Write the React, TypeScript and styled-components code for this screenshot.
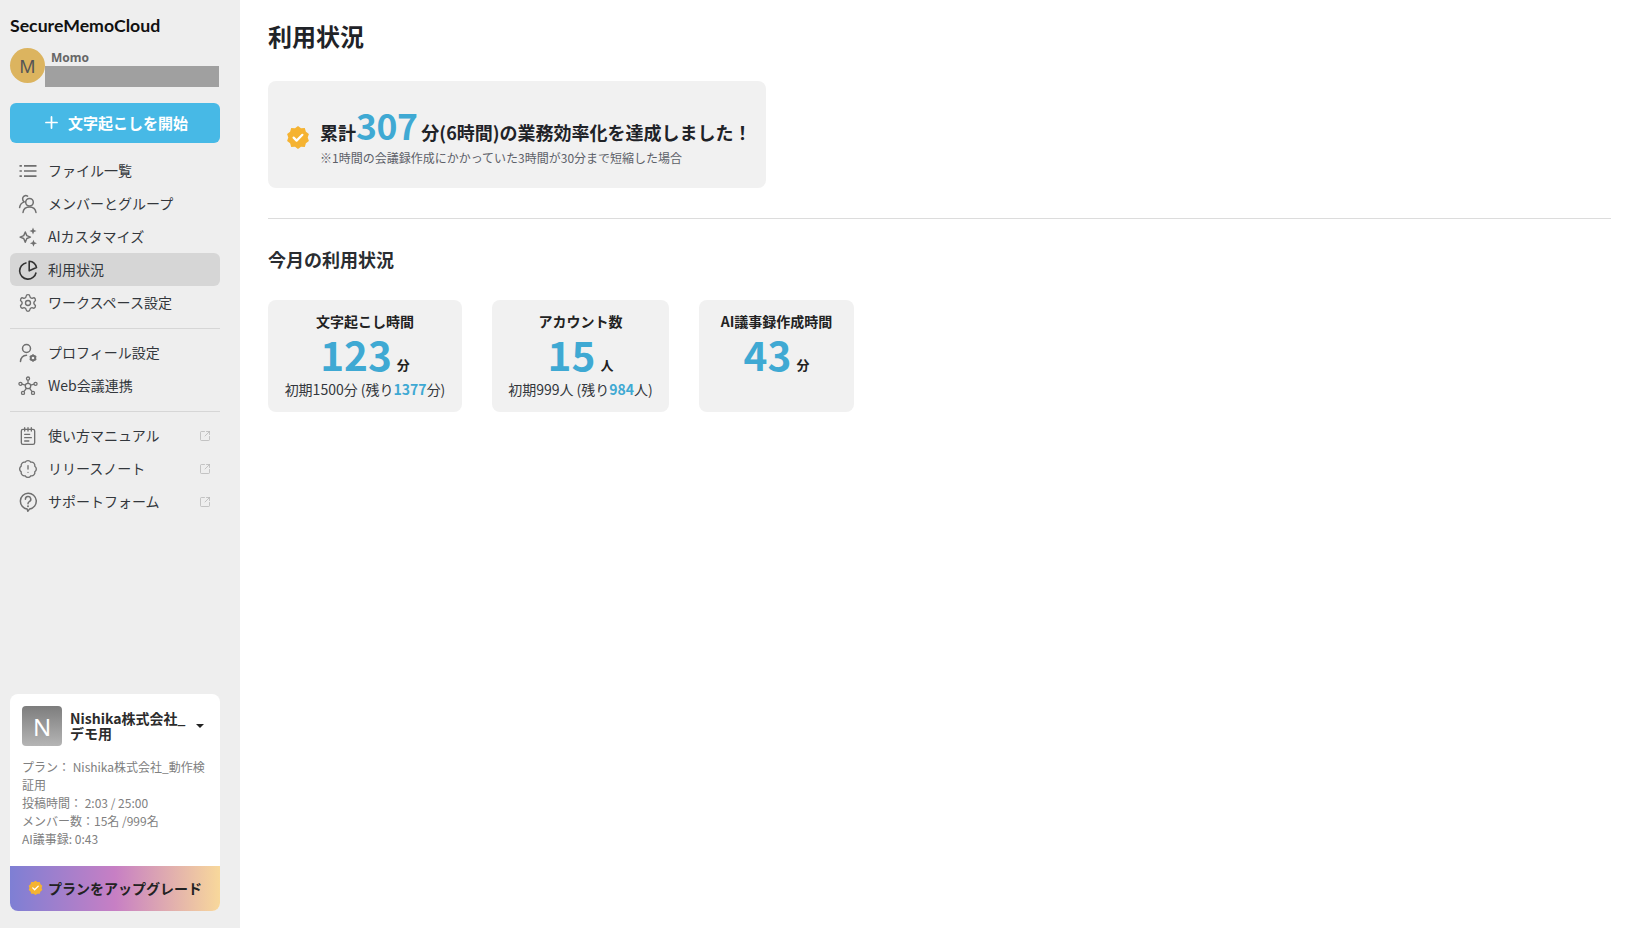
import React from "react";
import styled, { createGlobalStyle } from "styled-components";
import { Settings, NotepadText, BadgeAlert, Plus, SquareArrowOutUpRight } from "lucide-react";

const GlobalStyle = createGlobalStyle`
  html, body { margin: 0; padding: 0; height: 100%; background: #fff; }
  body {
    font-family: "Noto Sans CJK JP", "Noto Sans", sans-serif;
    color: #1f2328;
    overflow: hidden;
  }
  * { box-sizing: border-box; }
`;

const Page = styled.div`
  display: flex;
  width: 1636px;
  height: 928px;
`;

const Sidebar = styled.aside`
  width: 240px;
  height: 100%;
  flex-shrink: 0;
  background: #eeeeee;
  padding: 14px 20px 17px 10px;
  display: flex;
  flex-direction: column;
`;

const Logo = styled.div`
  font-family: "Lato", sans-serif;
  font-weight: 700;
  font-size: 17.7px;
  line-height: 24px;
  color: #111;
`;

const UserRow = styled.div`
  display: flex;
  margin-top: 10px;
  height: 39px;
`;

const Avatar = styled.div`
  width: 35px;
  height: 35px;
  border-radius: 50%;
  background: #dcb45f;
  color: #555;
  font-size: 18px;
  display: flex;
  align-items: center;
  justify-content: center;
  font-family: "Noto Sans", sans-serif;
`;

const UserInfo = styled.div`
  flex: 1;
  display: flex;
  flex-direction: column;
  padding-top: 2px;
`;

const UserName = styled.div`
  font-family: "Noto Sans", sans-serif;
  font-size: 12px;
  font-weight: 700;
  line-height: 16px;
  color: #666;
  padding-left: 6px;
`;

const RedactedBar = styled.div`
  width: 174px;
  height: 21px;
  background: #a0a0a0;
`;

const StartButton = styled.button`
  margin-top: 16px;
  height: 40px;
  width: 210px;
  border: none;
  border-radius: 6px;
  background: #47b9e6;
  color: #fff;
  font-family: inherit;
  font-size: 15px;
  font-weight: 700;
  display: flex;
  align-items: center;
  justify-content: center;
  gap: 7px;
  padding: 0 0 2px;
`;

const Nav = styled.nav`
  margin-top: 11px;
  display: flex;
  flex-direction: column;
`;

const NavRow = styled.div<{ $active?: boolean }>`
  height: 33px;
  width: 210px;
  display: flex;
  align-items: center;
  padding: 0 8px;
  border-radius: 6px;
  font-size: 14px;
  color: #33373c;
  background: ${(p) => (p.$active ? "#d6d6d6" : "transparent")};
`;

const NavIcon = styled.span<{ $active?: boolean }>`
  width: 20px;
  height: 20px;
  display: flex;
  align-items: center;
  justify-content: center;
  margin-right: 10px;
  color: ${(p) => (p.$active ? "#333" : "#6f6f6f")};
`;

const NavLabel = styled.span`
  flex: 1;
  white-space: nowrap;
  padding-bottom: 1px;
`;

const External = styled.span`
  display: flex;
  color: #b0b0b0;
  margin-right: 1px;
`;

const NavDivider = styled.div`
  width: 210px;
  height: 1px;
  background: #d6d6d6;
  margin: 9px 0 7px;
`;

const WorkspaceCard = styled.div`
  margin-top: auto;
  width: 210px;
  background: #fff;
  border-radius: 8px;
  overflow: hidden;
`;

const WorkspaceHead = styled.div`
  display: flex;
  align-items: center;
  padding: 12px 12px 0 12px;
`;

const WorkspaceLogo = styled.div`
  width: 40px;
  height: 40px;
  border-radius: 4px;
  background: linear-gradient(#7d7d7d, #b5b5b5);
  color: #fff;
  font-family: "Noto Sans", sans-serif;
  font-size: 24px;
  display: flex;
  align-items: center;
  justify-content: center;
  flex-shrink: 0;
`;

const WorkspaceName = styled.div`
  flex: 1;
  margin-left: 8px;
  font-size: 14px;
  font-weight: 700;
  line-height: 15px;
  color: #2c2c2c;
`;

const Caret = styled.span`
  width: 0;
  height: 0;
  border-left: 4px solid transparent;
  border-right: 4px solid transparent;
  border-top: 4px solid #222;
  margin-right: 4px;
`;

const WorkspaceInfo = styled.div`
  padding: 12px 12px 0 12px;
  font-size: 12px;
  line-height: 18px;
  height: 120px;
  color: #808080;
`;

const UpgradeButton = styled.div`
  height: 45px;
  background: linear-gradient(90deg, #7e7fd4 0%, #c77fc4 50%, #f8d89b 100%);
  display: flex;
  align-items: center;
  justify-content: center;
  gap: 5px;
  padding-bottom: 2px;
  font-size: 14px;
  font-weight: 700;
  color: #222;
`;

const Main = styled.main`
  flex: 1;
  padding: 18px 25px 0 28px;
`;

const Title = styled.h1`
  margin: 0;
  font-size: 24px;
  font-weight: 700;
  line-height: 36px;
  color: #1f2328;
`;

const Banner = styled.div`
  margin-top: 27px;
  width: 498px;
  height: 107px;
  background: #f1f1f1;
  border-radius: 8px;
  display: flex;
  align-items: center;
  padding: 4px 0 0 18px;
  gap: 10px;
`;

const BannerText = styled.div`
  display: flex;
  flex-direction: column;
`;

const BannerHead = styled.div`
  display: flex;
  align-items: baseline;
  font-size: 18px;
  font-weight: 700;
  line-height: 36px;
  white-space: nowrap;
`;

const BannerNumber = styled.span`
  font-size: 35.5px;
  font-weight: 700;
  line-height: 36px;
  letter-spacing: -0.5px;
  color: #3fa9d3;
  margin-right: 4px;
`;

const BannerNote = styled.div`
  font-size: 12px;
  line-height: 16px;
  color: #5c6068;
`;

const Rule = styled.hr`
  margin: 30px 0 0;
  border: none;
  height: 1px;
  background: #dcdcdc;
`;

const SubTitle = styled.h2`
  margin: 27px 0 0;
  font-size: 18px;
  font-weight: 700;
  line-height: 27px;
  color: #2a2d31;
`;

const Cards = styled.div`
  display: flex;
  gap: 30px;
  margin-top: 27px;
`;

const StatCard = styled.div<{ $w: number }>`
  width: ${(p) => p.$w}px;
  height: 112px;
  background: #f1f1f1;
  border-radius: 8px;
  display: flex;
  flex-direction: column;
  align-items: center;
  padding-top: 11px;
`;

const StatLabel = styled.div`
  font-size: 14px;
  font-weight: 700;
  line-height: 20px;
  color: #222;
`;

const StatValue = styled.div`
  display: flex;
  align-items: baseline;
  height: 40px;
  line-height: 40px;
  margin-top: 3px;
`;

const StatNumber = styled.span`
  font-size: 40.5px;
  font-weight: 700;
  color: #3fa9d3;
`;

const StatUnit = styled.span`
  font-size: 13px;
  font-weight: 700;
  color: #222;
  margin-left: 5px;
  transform: translateY(-1px);
`;

const StatNote = styled.div`
  font-size: 14px;
  line-height: 20px;
  margin-top: 5px;
  color: #33373c;
  white-space: nowrap;
`;

const Accent = styled.b`
  color: #3fa9d3;
  font-weight: 700;
`;

function VerifiedBadge({ size }: { size: number }) {
  return (
    <svg width={size} height={size} viewBox="0 0 24 24">
      <path
        fill="#f5b332"
        d="M12 1l3 2.3 3.8-.2 1.1 3.6 3 2.3L21.7 12.6l1.2 3.4-3 2.3-1.1 3.6-3.8-.1L12 24l-3-2.2-3.8.1-1.1-3.6-3-2.3 1.2-3.4L1.1 9l3-2.3 1.1-3.6 3.8.2z"
      />
      <path
        d="M7.6 12.6l3 3 5.8-5.8"
        fill="none"
        stroke="#fff"
        strokeWidth="2.2"
        strokeLinecap="round"
        strokeLinejoin="round"
      />
    </svg>
  );
}

function ListIcon() {
  return (
    <svg width="20" height="20" viewBox="0 0 20 20" stroke="currentColor" strokeWidth="1.7">
      <path d="M1.5 4.8h2.4M1.5 10h2.4M1.5 15.2h2.4M6 4.8h12.5M6 10h12.5M6 15.2h12.5" />
    </svg>
  );
}

function MembersIcon() {
  return (
    <svg width="20" height="20" viewBox="0 0 20 20" fill="none" stroke="currentColor" strokeWidth="1.5" strokeLinecap="round">
      <circle cx="11.5" cy="8.2" r="3.8" />
      <path d="M5 18.5c.4-3.6 3-5.6 6.5-5.6s6 2 6.5 5.6" />
      <path d="M9.6 2.2C8.8 1.7 7.9 1.5 7 1.7 4.900 2.200 4.200 4.300 4.900 6.200c.3.8.8 1.300 1.400 1.700-2.700.8-4.300 3-4.700 5.700" />
    </svg>
  );
}

function SparkIcon() {
  return (
    <svg width="22" height="22" viewBox="0 0 22 22" fill="currentColor">
      <path
        d="M8 5.500l1.700 4 4 1.600-4 1.600L8 16.800l-1.700-4.100-4-1.600 4-1.600z"
        fill="none"
        stroke="currentColor"
        strokeWidth="1.600"
        strokeLinejoin="round"
      />
      <path d="M16.500 0.500l1.100 2.800 2.800 1.100-2.800 1.100-1.100 2.800-1.100-2.800-2.800-1.100 2.800-1.100z" />
      <path d="M17 14l1.100 2.800 2.800 1.100-2.800 1.100-1.100 2.800-1.100-2.800-2.800-1.100 2.800-1.100z" />
    </svg>
  );
}

function UsageIcon() {
  return (
    <svg width="20" height="20" viewBox="0 0 20 20" fill="none" stroke="currentColor" strokeWidth="1.600" strokeLinejoin="round">
      <path d="M8.500 2.700a8.300 8.300 0 1 0 9.600 9.800" />
      <path d="M11.200 1.200a8 8 0 0 1 7.300 6.400l-7.300 3.200z" />
    </svg>
  );
}

function ProfileIcon() {
  return (
    <svg width="20" height="20" viewBox="0 0 20 20" fill="none" stroke="currentColor" strokeWidth="1.500" strokeLinecap="round">
      <circle cx="8.500" cy="5.500" r="4" />
      <path d="M2.500 18.500c.3-3.600 2.800-6 6-6.200" />
      <circle cx="15" cy="15" r="2.300" strokeWidth="2" />
      <path d="M15 11.300v1.300M15 17.400v1.300M11.800 13.200l1.100.6M17.100 16.200l1.100.6M11.800 16.800l1.100-.6M17.100 13.800l1.100-.6" strokeLinecap="butt" />
    </svg>
  );
}

function MeshIcon() {
  return (
    <svg width="22" height="22" viewBox="0 0 22 22" fill="none" stroke="currentColor" strokeWidth="1.400">
      <circle cx="11" cy="11" r="3" />
      <circle cx="11" cy="2.800" r="1.700" />
      <circle cx="2.700" cy="8.600" r="1.700" />
      <circle cx="19.300" cy="8.600" r="1.700" />
      <circle cx="5.500" cy="18.600" r="1.700" />
      <circle cx="16.500" cy="18.600" r="1.700" />
      <path d="M11 4.500V8M4.300 9l3.900 1.100M17.700 9l-3.900 1.100M6.500 17.200l2.700-3.700M15.500 17.200l-2.700-3.700" />
    </svg>
  );
}

function HelpIcon() {
  return (
    <svg width="20" height="20" viewBox="0 0 20 20" fill="none" stroke="currentColor" strokeWidth="1.500" strokeLinecap="round" strokeLinejoin="round">
      <path d="M10 1.200a8 8 0 0 1 1.500 15.900L9.800 19.200l-.6-2.100A8 8 0 0 1 10 1.200z" />
      <path d="M7.400 7.200a2.700 2.700 0 1 1 3.900 2.500c-.9.500-1.300 1-1.300 2" />
      <path d="M10 14.200v.1" strokeWidth="1.900" />
    </svg>
  );
}

const lucideProps = { size: 20, strokeWidth: 1.6 };

type Item = {
  label: string;
  icon: React.ReactNode;
  active?: boolean;
  external?: boolean;
};

const mainItems: Item[] = [
  { label: "ファイル一覧", icon: <ListIcon /> },
  { label: "メンバーとグループ", icon: <MembersIcon /> },
  { label: "AIカスタマイズ", icon: <SparkIcon /> },
  { label: "利用状況", icon: <UsageIcon />, active: true },
  { label: "ワークスペース設定", icon: <Settings {...lucideProps} /> },
];

const accountItems: Item[] = [
  { label: "プロフィール設定", icon: <ProfileIcon /> },
  { label: "Web会議連携", icon: <MeshIcon /> },
];

const helpItems: Item[] = [
  { label: "使い方マニュアル", icon: <NotepadText {...lucideProps} />, external: true },
  { label: "リリースノート", icon: <BadgeAlert {...lucideProps} />, external: true },
  { label: "サポートフォーム", icon: <HelpIcon />, external: true },
];

function NavGroup({ items }: { items: Item[] }) {
  return (
    <>
      {items.map((item) => (
        <NavRow key={item.label} $active={item.active}>
          <NavIcon $active={item.active}>{item.icon}</NavIcon>
          <NavLabel>{item.label}</NavLabel>
          {item.external && (
            <External>
              <SquareArrowOutUpRight size={12} strokeWidth={1.4} />
            </External>
          )}
        </NavRow>
      ))}
    </>
  );
}

export default function App() {
  return (
    <Page>
      <GlobalStyle />
      <Sidebar>
        <Logo>SecureMemoCloud</Logo>
        <UserRow>
          <Avatar>M</Avatar>
          <UserInfo>
            <UserName>Momo</UserName>
            <RedactedBar />
          </UserInfo>
        </UserRow>
        <StartButton>
          <Plus size={19} strokeWidth={2.2} />
          文字起こしを開始
        </StartButton>
        <Nav>
          <NavGroup items={mainItems} />
          <NavDivider />
          <NavGroup items={accountItems} />
          <NavDivider />
          <NavGroup items={helpItems} />
        </Nav>
        <WorkspaceCard>
          <WorkspaceHead>
            <WorkspaceLogo>N</WorkspaceLogo>
            <WorkspaceName>Nishika株式会社_デモ用</WorkspaceName>
            <Caret />
          </WorkspaceHead>
          <WorkspaceInfo>
            プラン： Nishika株式会社_動作検証用
            <br />
            投稿時間： 2:03 / 25:00
            <br />
            メンバー数：15名 /999名
            <br />
            AI議事録: 0:43
          </WorkspaceInfo>
          <UpgradeButton>
            <VerifiedBadge size={15} />
            プランをアップグレード
          </UpgradeButton>
        </WorkspaceCard>
      </Sidebar>
      <Main>
        <Title>利用状況</Title>
        <Banner>
          <VerifiedBadge size={24} />
          <BannerText>
            <BannerHead>
              累計<BannerNumber>307</BannerNumber>分(6時間)の業務効率化を達成しました！
            </BannerHead>
            <BannerNote>※1時間の会議録作成にかかっていた3時間が30分まで短縮した場合</BannerNote>
          </BannerText>
        </Banner>
        <Rule />
        <SubTitle>今月の利用状況</SubTitle>
        <Cards>
          <StatCard $w={194}>
            <StatLabel>文字起こし時間</StatLabel>
            <StatValue>
              <StatNumber>123</StatNumber>
              <StatUnit>分</StatUnit>
            </StatValue>
            <StatNote>
              初期1500分 (残り<Accent>1377</Accent>分)
            </StatNote>
          </StatCard>
          <StatCard $w={177}>
            <StatLabel>アカウント数</StatLabel>
            <StatValue>
              <StatNumber>15</StatNumber>
              <StatUnit>人</StatUnit>
            </StatValue>
            <StatNote>
              初期999人 (残り<Accent>984</Accent>人)
            </StatNote>
          </StatCard>
          <StatCard $w={155}>
            <StatLabel>AI議事録作成時間</StatLabel>
            <StatValue>
              <StatNumber>43</StatNumber>
              <StatUnit>分</StatUnit>
            </StatValue>
          </StatCard>
        </Cards>
      </Main>
    </Page>
  );
}
